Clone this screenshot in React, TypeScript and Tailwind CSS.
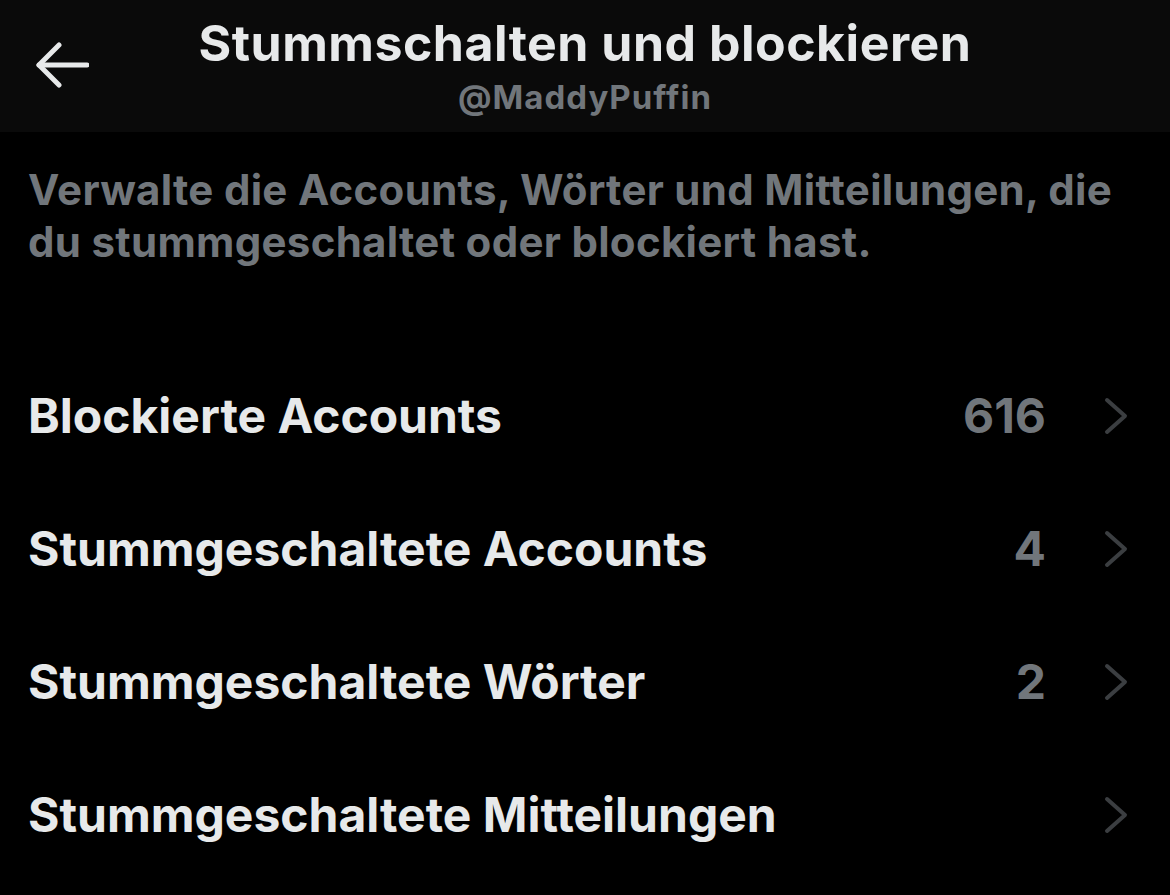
const rows = [
  { label: 'Blockierte Accounts', count: '616' },
  { label: 'Stummgeschaltete Accounts', count: '4' },
  { label: 'Stummgeschaltete Wörter', count: '2' },
  { label: 'Stummgeschaltete Mitteilungen', count: '' },
];

export default function App() {
  return (
    <div className="w-[1170px] h-[895px] bg-black overflow-hidden font-['Inter',sans-serif]">
      <header className="relative h-[132px] bg-[#0a0a0a] flex flex-col items-center">
        <button className="absolute left-[35px] top-[42px] text-[#e7e9ea]">
          <svg width="54" height="46" viewBox="0 0 54 46" fill="none" stroke="currentColor" strokeWidth="5" strokeLinecap="round" strokeLinejoin="round">
            <path d="M4 23h48" />
            <path d="M24 3L4 23l20 20" />
          </svg>
        </button>
        <h1 className="mt-[15px] text-[50px] leading-[56px] font-bold text-[#e7e9ea] tracking-[0.5px]">
          Stummschalten und blockieren
        </h1>
        <p className="mt-[7px] text-[33px] leading-[38px] font-bold text-[#71767b] tracking-[1px]">@MaddyPuffin</p>
      </header>

      <p className="px-[28px] pt-[32px] text-[42px] leading-[52px] font-bold text-[#71767b] tracking-[0.3px]">
        Verwalte die Accounts, Wörter und Mitteilungen, die du stummgeschaltet oder blockiert hast.
      </p>

      <div className="mt-[81px] flex flex-col">
        {rows.map((row) => (
          <div key={row.label} className="h-[133px] flex items-center pl-[28px] pr-[42px]">
            <span className="flex-1 text-[48px] font-bold text-[#e7e9ea]">{row.label}</span>
            <span className="text-[48px] font-bold text-[#71767b] mr-[58px]">{row.count}</span>
            <svg width="24" height="38" viewBox="0 0 24 38" fill="none" stroke="#3b3e41" strokeWidth="4" strokeLinecap="round" strokeLinejoin="round">
              <path d="M3 3l18 16L3 35" />
            </svg>
          </div>
        ))}
      </div>
    </div>
  );
}
